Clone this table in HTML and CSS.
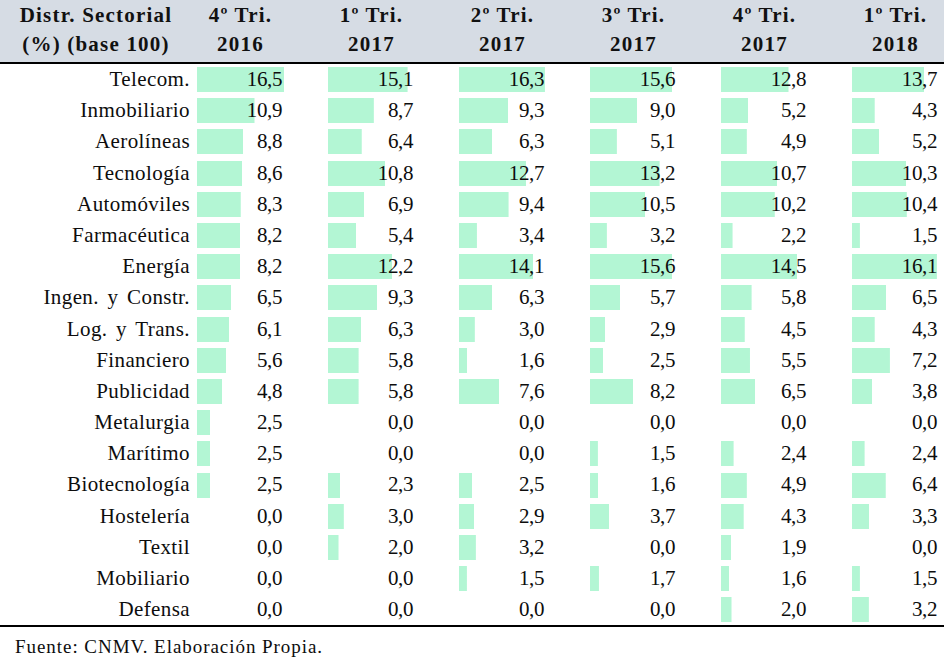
FILE: index.html
```html
<!DOCTYPE html>
<html lang="es">
<head>
<meta charset="utf-8">
<title>Distr. Sectorial</title>
<link rel="stylesheet" href="styles.css">
</head>
<body>
<div class="table">
  <div class="head">
    <div class="hlabel">Distr. Sectorial<br>(%) (base 100)</div>
    <div class="hcell">4º Tri.<br>2016</div>
    <div class="hcell">1º Tri.<br>2017</div>
    <div class="hcell">2º Tri.<br>2017</div>
    <div class="hcell">3º Tri.<br>2017</div>
    <div class="hcell">4º Tri.<br>2017</div>
    <div class="hcell">1º Tri.<br>2018</div>
  </div>
  <div class="body">
    <div class="row"><div class="label">Telecom.</div><div class="cell" style="--w:100%">16,5</div><div class="cell" style="--w:91.5%">15,1</div><div class="cell" style="--w:98.8%">16,3</div><div class="cell" style="--w:94.5%">15,6</div><div class="cell" style="--w:77.6%">12,8</div><div class="cell" style="--w:83%">13,7</div></div>
    <div class="row"><div class="label">Inmobiliario</div><div class="cell" style="--w:66.1%">10,9</div><div class="cell" style="--w:52.7%">8,7</div><div class="cell" style="--w:56.4%">9,3</div><div class="cell" style="--w:54.5%">9,0</div><div class="cell" style="--w:31.5%">5,2</div><div class="cell" style="--w:26.1%">4,3</div></div>
    <div class="row"><div class="label">Aerolíneas</div><div class="cell" style="--w:53.3%">8,8</div><div class="cell" style="--w:38.8%">6,4</div><div class="cell" style="--w:38.2%">6,3</div><div class="cell" style="--w:30.9%">5,1</div><div class="cell" style="--w:29.7%">4,9</div><div class="cell" style="--w:31.5%">5,2</div></div>
    <div class="row"><div class="label">Tecnología</div><div class="cell" style="--w:52.1%">8,6</div><div class="cell" style="--w:65.5%">10,8</div><div class="cell" style="--w:77%">12,7</div><div class="cell" style="--w:80%">13,2</div><div class="cell" style="--w:64.8%">10,7</div><div class="cell" style="--w:62.4%">10,3</div></div>
    <div class="row"><div class="label">Automóviles</div><div class="cell" style="--w:50.3%">8,3</div><div class="cell" style="--w:41.8%">6,9</div><div class="cell" style="--w:57%">9,4</div><div class="cell" style="--w:63.6%">10,5</div><div class="cell" style="--w:61.8%">10,2</div><div class="cell" style="--w:63%">10,4</div></div>
    <div class="row"><div class="label">Farmacéutica</div><div class="cell" style="--w:49.7%">8,2</div><div class="cell" style="--w:32.7%">5,4</div><div class="cell" style="--w:20.6%">3,4</div><div class="cell" style="--w:19.4%">3,2</div><div class="cell" style="--w:13.3%">2,2</div><div class="cell" style="--w:9.1%">1,5</div></div>
    <div class="row"><div class="label">Energía</div><div class="cell" style="--w:49.7%">8,2</div><div class="cell" style="--w:73.9%">12,2</div><div class="cell" style="--w:85.5%">14,1</div><div class="cell" style="--w:94.5%">15,6</div><div class="cell" style="--w:87.9%">14,5</div><div class="cell" style="--w:97.6%">16,1</div></div>
    <div class="row"><div class="label">Ingen. y Constr.</div><div class="cell" style="--w:39.4%">6,5</div><div class="cell" style="--w:56.4%">9,3</div><div class="cell" style="--w:38.2%">6,3</div><div class="cell" style="--w:34.5%">5,7</div><div class="cell" style="--w:35.2%">5,8</div><div class="cell" style="--w:39.4%">6,5</div></div>
    <div class="row"><div class="label">Log. y Trans.</div><div class="cell" style="--w:37%">6,1</div><div class="cell" style="--w:38.2%">6,3</div><div class="cell" style="--w:18.2%">3,0</div><div class="cell" style="--w:17.6%">2,9</div><div class="cell" style="--w:27.3%">4,5</div><div class="cell" style="--w:26.1%">4,3</div></div>
    <div class="row"><div class="label">Financiero</div><div class="cell" style="--w:33.9%">5,6</div><div class="cell" style="--w:35.2%">5,8</div><div class="cell" style="--w:9.7%">1,6</div><div class="cell" style="--w:15.2%">2,5</div><div class="cell" style="--w:33.3%">5,5</div><div class="cell" style="--w:43.6%">7,2</div></div>
    <div class="row"><div class="label">Publicidad</div><div class="cell" style="--w:29.1%">4,8</div><div class="cell" style="--w:35.2%">5,8</div><div class="cell" style="--w:46.1%">7,6</div><div class="cell" style="--w:49.7%">8,2</div><div class="cell" style="--w:39.4%">6,5</div><div class="cell" style="--w:23%">3,8</div></div>
    <div class="row"><div class="label">Metalurgia</div><div class="cell" style="--w:15.2%">2,5</div><div class="cell" style="--w:0%">0,0</div><div class="cell" style="--w:0%">0,0</div><div class="cell" style="--w:0%">0,0</div><div class="cell" style="--w:0%">0,0</div><div class="cell" style="--w:0%">0,0</div></div>
    <div class="row"><div class="label">Marítimo</div><div class="cell" style="--w:15.2%">2,5</div><div class="cell" style="--w:0%">0,0</div><div class="cell" style="--w:0%">0,0</div><div class="cell" style="--w:9.1%">1,5</div><div class="cell" style="--w:14.5%">2,4</div><div class="cell" style="--w:14.5%">2,4</div></div>
    <div class="row"><div class="label">Biotecnología</div><div class="cell" style="--w:15.2%">2,5</div><div class="cell" style="--w:13.9%">2,3</div><div class="cell" style="--w:15.2%">2,5</div><div class="cell" style="--w:9.7%">1,6</div><div class="cell" style="--w:29.7%">4,9</div><div class="cell" style="--w:38.8%">6,4</div></div>
    <div class="row"><div class="label">Hostelería</div><div class="cell" style="--w:0%">0,0</div><div class="cell" style="--w:18.2%">3,0</div><div class="cell" style="--w:17.6%">2,9</div><div class="cell" style="--w:22.4%">3,7</div><div class="cell" style="--w:26.1%">4,3</div><div class="cell" style="--w:20%">3,3</div></div>
    <div class="row"><div class="label">Textil</div><div class="cell" style="--w:0%">0,0</div><div class="cell" style="--w:12.1%">2,0</div><div class="cell" style="--w:19.4%">3,2</div><div class="cell" style="--w:0%">0,0</div><div class="cell" style="--w:11.5%">1,9</div><div class="cell" style="--w:0%">0,0</div></div>
    <div class="row"><div class="label">Mobiliario</div><div class="cell" style="--w:0%">0,0</div><div class="cell" style="--w:0%">0,0</div><div class="cell" style="--w:9.1%">1,5</div><div class="cell" style="--w:10.3%">1,7</div><div class="cell" style="--w:9.7%">1,6</div><div class="cell" style="--w:9.1%">1,5</div></div>
    <div class="row"><div class="label">Defensa</div><div class="cell" style="--w:0%">0,0</div><div class="cell" style="--w:0%">0,0</div><div class="cell" style="--w:0%">0,0</div><div class="cell" style="--w:0%">0,0</div><div class="cell" style="--w:12.1%">2,0</div><div class="cell" style="--w:19.4%">3,2</div></div>
  </div>
  <div class="note">Fuente: CNMV. Elaboración Propia.</div>
</div>
</body>
</html>
```

FILE: styles.css
```css
html, body {
  margin: 0;
  padding: 0;
  background: #ffffff;
}

body {
  font-family: "Liberation Serif", "Times New Roman", serif;
  color: #0d0d0d;
  width: 944px;
  height: 672px;
  overflow: hidden;
}

.table {
  width: 944px;
}

.head {
  display: flex;
  background: #d6dce4;
  height: 61px;
  border-bottom: 2px solid #000000;
  padding-top: 1px;
  box-sizing: content-box;
}

.hlabel,
.hcell {
  font-weight: bold;
  font-size: 21px;
  line-height: 29px;
  letter-spacing: 1.2px;
  text-align: center;
  color: #111111;
}

.hlabel {
  width: 192px;
  margin-right: 5px;
}

.hcell {
  width: 87px;
  white-space: nowrap;
}

.hcell + .hcell {
  margin-left: 44px;
}

.body {
  border-bottom: 2px solid #000000;
}

.row {
  display: flex;
  height: 31.2px;
  line-height: 31.2px;
  font-size: 21px;
}

.label {
  width: 190px;
  margin-right: 7px;
  text-align: right;
  letter-spacing: 0.4px;
  word-spacing: 3px;
  white-space: nowrap;
}

.cell {
  width: 87px;
  text-align: right;
  letter-spacing: -0.4px;
  padding-right: 2px;
  box-sizing: border-box;
  background-image: linear-gradient(#b3f6d4, #b3f6d4);
  background-repeat: no-repeat;
  background-position: 0 3.1px;
  background-size: var(--w) 25px;
}

.cell + .cell {
  margin-left: 44px;
}

.note {
  font-size: 19px;
  letter-spacing: 0.95px;
  padding: 10px 0 0 15px;
  line-height: 20px;
}
```
